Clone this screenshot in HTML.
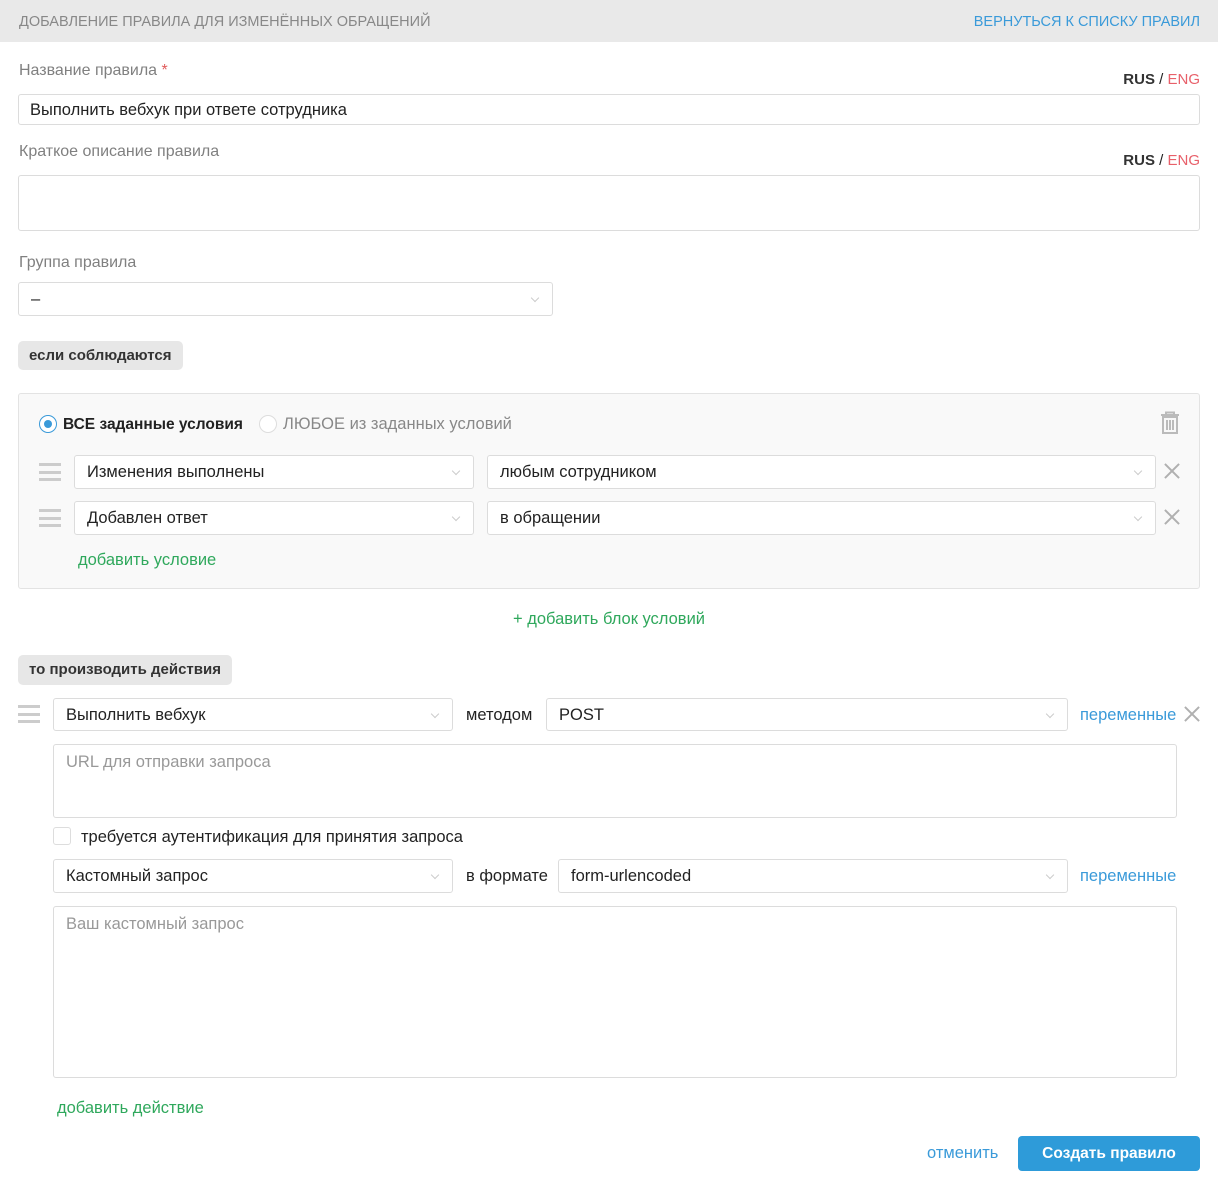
<!DOCTYPE html>
<html><head><meta charset="utf-8">
<style>
*{box-sizing:border-box;margin:0;padding:0}
body{width:1218px;height:1188px;background:#fff;position:relative;font-family:"Liberation Sans","Noto Sans CJK SC",sans-serif;font-size:16.5px;color:#222;overflow:hidden}
.a{position:absolute;white-space:nowrap}
.hdr{position:absolute;left:0;top:0;width:1218px;height:42px;background:#e9e9e9}
.lbl{color:#808080;font-size:16px}
.inp{position:absolute;background:#fff;border:1px solid #dcdcdc;border-radius:3px}
.sel{position:absolute;background:#fff;border:1px solid #dcdcdc;border-radius:3px;padding-left:12px;line-height:33px}
.sel::after{content:"";position:absolute;right:14px;top:12px;width:5px;height:5px;border-right:1px solid #ccc;border-bottom:1px solid #ccc;transform:rotate(45deg)}
.badge{position:absolute;background:#e7e7e7;border-radius:5px;font-weight:bold;color:#333;font-size:15px;padding:0 11px;line-height:29px}
.ham{position:absolute;width:22px;height:18px;border-top:3px solid #ccc;border-bottom:3px solid #ccc}
.ham::after{content:"";position:absolute;left:0;top:5px;width:22px;height:3px;background:#ccc}
.x{position:absolute;width:16px;height:16px}
.x::before,.x::after{content:"";position:absolute;left:7px;top:-2px;width:2px;height:20px;background:#b0b0b0;transform:rotate(45deg)}
.x::after{transform:rotate(-45deg)}
.green{color:#2fa85c}
.blue{color:#3a9ad9}
.ph{color:#999}
.rl{font-size:15px}
</style></head><body>
<div class="hdr"></div>
<div class="a" style="left:19px;top:14px;color:#888;font-size:14.5px">ДОБАВЛЕНИЕ ПРАВИЛА ДЛЯ ИЗМЕНЁННЫХ ОБРАЩЕНИЙ</div>
<div class="a blue" style="right:18px;top:14px;font-size:14.5px">ВЕРНУТЬСЯ К СПИСКУ ПРАВИЛ</div>

<div class="a lbl" style="left:19px;top:62px">Название правила <span style="color:#e05a5a">*</span></div>
<div class="a rl" style="right:18px;top:71px"><b style="color:#333">RUS</b> / <span style="color:#e8606a">ENG</span></div>
<div class="inp" style="left:18px;top:94px;width:1182px;height:31px"></div>
<div class="a" style="left:30px;top:101px">Выполнить вебхук при ответе сотрудника</div>

<div class="a lbl" style="left:19px;top:143px">Краткое описание правила</div>
<div class="a rl" style="right:18px;top:152px"><b style="color:#333">RUS</b> / <span style="color:#e8606a">ENG</span></div>
<div class="inp" style="left:18px;top:175px;width:1182px;height:56px"></div>

<div class="a lbl" style="left:19px;top:254px">Группа правила</div>
<div class="sel" style="left:18px;top:282px;width:535px;height:34px">–</div>

<div class="badge" style="left:18px;top:341px">если соблюдаются</div>

<div class="a" style="left:18px;top:393px;width:1182px;height:196px;background:#f9f9f9;border:1px solid #e3e3e3;border-radius:3px"></div>
<div class="a" style="left:39px;top:415px;width:18px;height:18px;border:1px solid #3a9ad9;border-radius:50%;background:#fff"></div>
<div class="a" style="left:44px;top:420px;width:8px;height:8px;border-radius:50%;background:#3a9ad9"></div>
<div class="a" style="left:63px;top:416px;font-weight:bold;color:#222;font-size:15.5px">ВСЕ заданные условия</div>
<div class="a" style="left:259px;top:415px;width:18px;height:18px;border:1px solid #ddd;border-radius:50%;background:#fff"></div>
<div class="a" style="left:283px;top:415px;color:#888">ЛЮБОЕ из заданных условий</div>
<svg class="a" style="left:1159px;top:411px" width="22" height="24" viewBox="0 0 22 24"><path d="M7 3V1.5h8V3M2 4h18M4 6h14v16H4z M8 9v10 M11 9v10 M14 9v10" fill="none" stroke="#bbb" stroke-width="2"/></svg>

<div class="ham" style="left:39px;top:463px"></div>
<div class="sel" style="left:74px;top:455px;width:400px;height:34px">Изменения выполнены</div>
<div class="sel" style="left:487px;top:455px;width:669px;height:34px">любым сотрудником</div>
<div class="x" style="left:1164px;top:463px"></div>
<div class="ham" style="left:39px;top:509px"></div>
<div class="sel" style="left:74px;top:501px;width:400px;height:34px">Добавлен ответ</div>
<div class="sel" style="left:487px;top:501px;width:669px;height:34px">в обращении</div>
<div class="x" style="left:1164px;top:509px"></div>
<div class="a green" style="left:78px;top:551px">добавить условие</div>

<div class="a green" style="left:513px;top:610px">+ добавить блок условий</div>

<div class="badge" style="left:18px;top:655px;line-height:30px">то производить действия</div>

<div class="ham" style="left:18px;top:705px"></div>
<div class="sel" style="left:53px;top:698px;width:400px;height:33px">Выполнить вебхук</div>
<div class="a" style="left:466px;top:706px">методом</div>
<div class="sel" style="left:546px;top:698px;width:522px;height:33px">POST</div>
<div class="a blue" style="left:1080px;top:706px">переменные</div>
<div class="x" style="left:1184px;top:706px"></div>

<div class="inp" style="left:53px;top:744px;width:1124px;height:74px"></div>
<div class="a ph" style="left:66px;top:753px">URL для отправки запроса</div>
<div class="a" style="left:53px;top:827px;width:18px;height:18px;border:1px solid #ddd;border-radius:3px;background:#fff"></div>
<div class="a" style="left:81px;top:828px">требуется аутентификация для принятия запроса</div>

<div class="sel" style="left:53px;top:859px;width:400px;height:34px">Кастомный запрос</div>
<div class="a" style="left:466px;top:867px">в формате</div>
<div class="sel" style="left:558px;top:859px;width:510px;height:34px">form-urlencoded</div>
<div class="a blue" style="left:1080px;top:867px">переменные</div>

<div class="inp" style="left:53px;top:906px;width:1124px;height:172px"></div>
<div class="a ph" style="left:66px;top:915px">Ваш кастомный запрос</div>

<div class="a green" style="left:57px;top:1099px">добавить действие</div>

<div class="a blue" style="left:927px;top:1144px">отменить</div>
<div class="a" style="left:1018px;top:1136px;width:182px;height:35px;background:#2e9bd9;border-radius:4px;color:#fff;font-weight:bold;text-align:center;line-height:35px;font-size:15.5px">Создать правило</div>
</body></html>
